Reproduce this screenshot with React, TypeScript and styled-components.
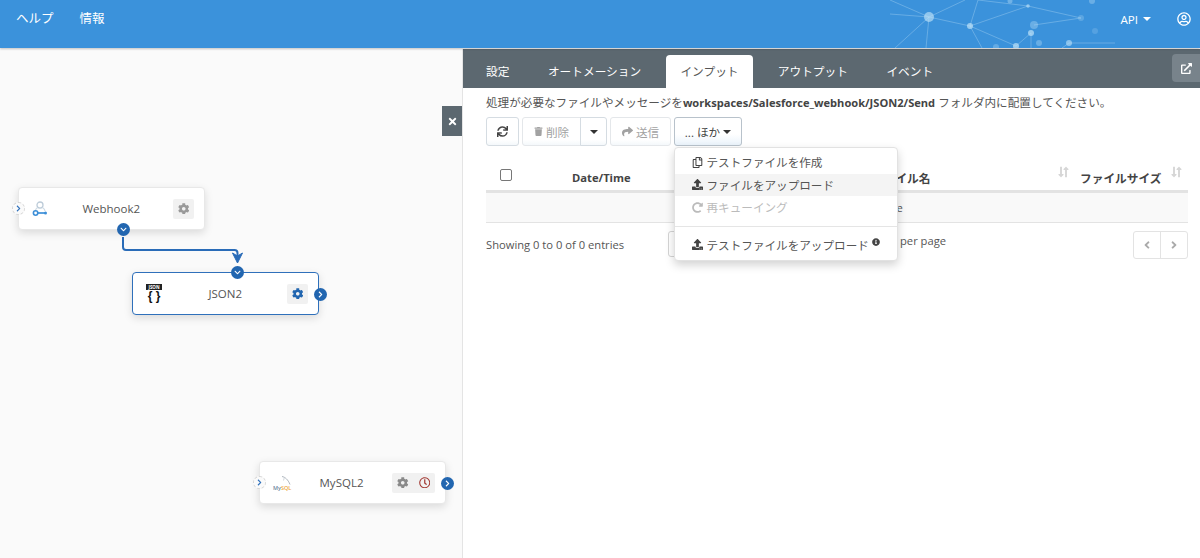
import styled, { createGlobalStyle } from "styled-components"
import {
  FaAngleLeft,
  FaAngleRight,
  FaChevronDown,
  FaChevronRight,
  FaCog,
  FaExternalLinkAlt,
  FaInfoCircle,
  FaLongArrowAltDown,
  FaLongArrowAltUp,
  FaRedoAlt,
  FaRegClock,
  FaRegCopy,
  FaRegUserCircle,
  FaShare,
  FaSync,
  FaTimes,
  FaTrash,
  FaUpload,
} from "react-icons/fa"

const GlobalStyle = createGlobalStyle`
  html, body {
    margin: 0;
    height: 100%;
    overflow: hidden;
  }
  body {
    font-family: "Open Sans", "Noto Sans CJK JP", sans-serif;
    font-size: 12px;
    color: #555;
    background: #fff;
  }
`

const Page = styled.div`
  width: 1200px;
  height: 558px;
  display: flex;
  flex-direction: column;
  overflow: hidden;
`

const Header = styled.header`
  position: relative;
  z-index: 2;
  height: 48px;
  flex: none;
  background: #3b92db;
  box-shadow: 0 1px 2px rgba(0, 0, 0, 0.25);
  display: flex;
  align-items: flex-start;
  color: #fff;
`

const NavLink = styled.a<{ $gap: number }>`
  margin-top: 9px;
  font-size: 12.5px;
  line-height: 20px;
  color: #fff;
  margin-left: ${(p) => p.$gap}px;
`

const HeaderRight = styled.div`
  margin-left: auto;
  margin-top: 9px;
  padding-right: 9px;
  display: flex;
  align-items: center;
  height: 20px;
  gap: 26px;
`

const ApiMenu = styled.span`
  display: flex;
  align-items: center;
  gap: 5px;
  font-size: 11.6px;
`

const Caret = styled.i<{ $dark?: boolean }>`
  display: inline-block;
  width: 0;
  height: 0;
  border-left: 4px solid transparent;
  border-right: 4px solid transparent;
  border-top: 4px solid ${(p) => (p.$dark ? "#333" : "#fff")};
`

const Network = styled.svg`
  position: absolute;
  left: 890px;
  top: 0;
`

const Body = styled.div`
  flex: 1;
  display: flex;
  min-height: 0;
  padding-top: 1px;
`

const Canvas = styled.section`
  position: relative;
  width: 462px;
  flex: none;
  background: #fafafa;
  border-right: 1px solid #e4e4e4;
`

const CloseTab = styled.button`
  position: absolute;
  right: 0;
  top: 57px;
  width: 20px;
  height: 30px;
  padding: 0;
  border: 0;
  background: #5c6870;
  color: #fff;
  font-size: 11px;
  display: flex;
  align-items: center;
  justify-content: center;
`

const Connector = styled.svg`
  position: absolute;
  left: 0;
  top: 0;
  pointer-events: none;
`

const Node = styled.div<{ $x: number; $y: number; $selected?: boolean }>`
  position: absolute;
  left: ${(p) => p.$x}px;
  top: ${(p) => p.$y}px;
  box-sizing: border-box;
  width: 187px;
  height: 43px;
  background: #fff;
  border-radius: 4px;
  border: 1px solid ${(p) => (p.$selected ? "#2f70bb" : "#e8e8e8")};
  box-shadow: 0 3px 8px rgba(0, 0, 0, 0.13);
  display: flex;
  align-items: center;
  padding: 0 10px 0 13px;
  color: #555;
`

const NodeIcon = styled.div`
  width: 16px;
  height: 24px;
  flex: none;
  display: flex;
  flex-direction: column;
  align-items: flex-start;
  justify-content: center;
`

const NodeName = styled.span`
  flex: 1;
  text-align: center;
  font-size: 11.5px;
  padding-left: 2px;
`

const NodeActions = styled.div`
  display: flex;
  align-items: center;
  height: 20px;
  flex: none;
  background: #f1f1f1;
  border-radius: 2px;
  padding: 0 5px;
  gap: 10px;
`

const ActionIcon = styled.span<{ $color: string }>`
  display: flex;
  color: ${(p) => p.$color};
  font-size: 11.5px;
`

const Port = styled.span<{ $side: "left" | "right" | "top" | "bottom"; $ghost?: boolean }>`
  position: absolute;
  width: 13px;
  height: 13px;
  border-radius: 50%;
  display: flex;
  align-items: center;
  justify-content: center;
  font-size: 7px;
  box-sizing: border-box;
  color: ${(p) => (p.$ghost ? "#2f70bb" : "#fff")};
  background: ${(p) => (p.$ghost ? "#fafafa" : "#2266b0")};
  border: ${(p) => (p.$ghost ? "1px dashed #d4d4d4" : "none")};
  ${(p) => p.$side === "left" && "left: -7px; top: 14px;"}
  ${(p) => p.$side === "right" && "right: -9px; top: 14.5px;"}
  ${(p) => p.$side === "top" && "left: 98px; top: -7px;"}
  ${(p) => p.$side === "bottom" && "left: 98px; bottom: -7px;"}
`

const JsonBadge = styled.span`
  width: 16px;
  background: #222;
  color: #fff;
  font-size: 4.5px;
  font-weight: 700;
  line-height: 6px;
  text-align: center;
`

const JsonBraces = styled.span`
  width: 16px;
  color: #111;
  font-family: "Liberation Sans", sans-serif;
  font-size: 12px;
  font-weight: 700;
  line-height: 13px;
  text-align: center;
  white-space: nowrap;
`

const MysqlLogo = styled.span`
  font-size: 5.5px;
  font-weight: 600;
  line-height: 6px;
  color: #6d86a0;
  white-space: nowrap;

  b {
    font-weight: 600;
    color: #eda53c;
  }
`

const Dolphin = styled.svg`
  margin: 2px 0 0 8px;
`

const Panel = styled.section`
  flex: 1;
  min-width: 0;
  display: flex;
  flex-direction: column;
`

const TabBar = styled.nav`
  position: relative;
  flex: none;
  height: 39px;
  box-sizing: border-box;
  background: #5c6870;
  display: flex;
  align-items: flex-end;
  padding-left: 9px;
`

const Tab = styled.span<{ $active?: boolean }>`
  height: 33px;
  line-height: 33px;
  padding: 0 ${(p) => (p.$active ? 14.75 : 14)}px;
  font-size: 11.7px;
  border-radius: 4px 4px 0 0;
  margin-right: 10.5px;
  color: ${(p) => (p.$active ? "#555" : "#fff")};
  background: ${(p) => (p.$active ? "#fff" : "transparent")};
`

const PopOut = styled.span`
  position: absolute;
  right: 0;
  top: 5px;
  width: 28px;
  height: 28px;
  background: #78838b;
  border-radius: 4px 0 0 4px;
  color: #fff;
  font-size: 11px;
  display: flex;
  align-items: center;
  justify-content: center;
`

const Content = styled.div`
  position: relative;
  flex: 1;
  padding: 6px 12px 0 23px;
`

const Notice = styled.p`
  margin: 0 0 6px;
  font-size: 11.6px;
  line-height: 17px;
  white-space: nowrap;

  b {
    font-size: 11.1px;
    color: #444;
  }
`

const Toolbar = styled.div`
  display: flex;
  gap: 3px;
  height: 29px;
`

const Group = styled.div`
  display: flex;
`

const Btn = styled.button<{ $w: number; $muted?: boolean; $open?: boolean; $joinL?: boolean; $joinR?: boolean }>`
  width: ${(p) => p.$w}px;
  height: 29px;
  box-sizing: border-box;
  padding: 0;
  font: inherit;
  font-size: 11.6px;
  display: flex;
  align-items: center;
  justify-content: center;
  gap: 3px;
  color: ${(p) => (p.$muted ? "#a2a2a2" : "#444")};
  background: ${(p) => (p.$open ? "linear-gradient(#fff 60%, #eaf3fb)" : "linear-gradient(#fff 80%, #f4f8fb)")};
  border: 1px solid ${(p) => (p.$open ? "#b8c2cb" : p.$muted ? "#e4e7ea" : "#d5dce2")};
  border-radius: ${(p) => (p.$joinL ? "0 3px 3px 0" : p.$joinR ? "3px 0 0 3px" : "3px")};
  ${(p) => p.$joinL && "margin-left: -1px; border-color: #d5dce2;"}
`

const Table = styled.table`
  width: 702px;
  margin-top: 13px;
  border-collapse: collapse;
  table-layout: fixed;
`

const Th = styled.th<{ $w: number; $pad?: number }>`
  position: relative;
  width: ${(p) => p.$w}px;
  height: 32px;
  box-sizing: border-box;
  padding: 6px 0 0 ${(p) => p.$pad || 0}px;
  text-align: left;
  font-size: 11.7px;
  font-weight: 700;
  color: #444;
  border-bottom: 3px solid #e3e3e3;
  white-space: nowrap;
`

const DateLabel = styled.span`
  font-size: 11.2px;
`

const SortIcon = styled.span`
  position: absolute;
  right: 3px;
  top: 7px;
  color: #d6d6d6;
  font-size: 12px;
  display: flex;

  svg + svg {
    margin-left: -7px;
  }
`

const CheckBox = styled.input`
  appearance: none;
  display: block;
  margin: -4px 0 0 14px;
  width: 12px;
  height: 12px;
  border: 1px solid #777;
  border-radius: 2px;
  background: #fff;
`

const EmptyCell = styled.td`
  height: 29px;
  padding: 0;
  text-align: center;
  font-size: 11.2px;
  background: #f9f9f9;
  border-bottom: 1px solid #e3e3e3;
`

const Footer = styled.div`
  display: flex;
  align-items: flex-start;
  margin-top: 8px;
  font-size: 11.2px;
`

const Showing = styled.span`
  margin-top: 6px;
  line-height: 16px;
  width: 182px;
`

const PageSize = styled.span`
  width: 50px;
  height: 26px;
  box-sizing: border-box;
  border: 1px solid #d5d5d5;
  border-radius: 3px;
`

const PerPage = styled.span`
  margin-left: 182px;
  margin-top: 2px;
  line-height: 16px;
`

const Pager = styled.div`
  margin-left: auto;
  display: flex;
  border: 1px solid #e3e3e3;
  border-radius: 3px;
`

const PagerBtn = styled.span<{ $first?: boolean }>`
  width: 26px;
  height: 26px;
  display: flex;
  align-items: center;
  justify-content: center;
  font-size: 12px;
  color: #aaa;
  ${(p) => p.$first && "border-right: 1px solid #e3e3e3;"}
`

const Menu = styled.ul`
  position: absolute;
  left: 211px;
  top: 59px;
  width: 224px;
  height: 114px;
  box-sizing: border-box;
  margin: 0;
  padding: 3px 0 0;
  list-style: none;
  background: #fff;
  border: 1px solid #e2e2e2;
  border-radius: 4px;
  box-shadow: 0 4px 10px rgba(0, 0, 0, 0.18);
`

const MenuItem = styled.li<{ $active?: boolean; $disabled?: boolean }>`
  height: 22.5px;
  display: flex;
  align-items: center;
  gap: 3.5px;
  padding-left: 17px;
  font-size: 11.6px;
  color: ${(p) => (p.$disabled ? "#bbb" : "#555")};
  background: ${(p) => (p.$active ? "#f4f4f4" : "transparent")};

  svg {
    font-size: 11px;
    color: ${(p) => (p.$disabled ? "#bbb" : "#444")};
  }
`

const Divider = styled.li`
  height: 1px;
  margin: 7px 0 7px;
  background: #e5e5e5;
`

const Info = styled.sup`
  display: flex;
  margin: -5px 0 0 0;
  color: #444;

  svg {
    font-size: 8px;
  }
`

const dots: [number, number, number, number][] = [
  [39, 17, 5, 0.55],
  [80, 26, 3, 0.6],
  [138, 6, 1.8, 0.55],
  [120, 1, 2.5, 0.3],
  [144, 25, 4, 0.25],
  [141, 33, 3, 0.6],
  [126, 46, 3, 0.6],
  [149, 43, 3, 0.25],
  [179, 43, 3, 0.5],
  [106, 47, 3, 0.2],
  [191, 18, 3, 0.15],
  [202, 1, 3, 0.25],
  [205, 31, 3, 0.1],
]

const lines: [number, number, number, number][] = [
  [39, 17, 80, 26],
  [39, 17, 75, 0],
  [39, 17, 36, 48],
  [39, 17, 0, 0],
  [39, 17, 5, 48],
  [39, 17, 0, 14],
  [80, 26, 88, 0],
  [80, 26, 138, 6],
  [80, 26, 126, 46],
  [80, 26, 92, 48],
  [88, 0, 138, 6],
  [144, 25, 191, 18],
  [138, 6, 191, 18],
  [141, 33, 126, 46],
  [141, 33, 141, 48],
  [179, 43, 172, 48],
  [179, 43, 225, 43],
]

function SortArrows() {
  return (
    <SortIcon>
      <FaLongArrowAltDown />
      <FaLongArrowAltUp />
    </SortIcon>
  )
}

function WebhookIcon() {
  return (
    <svg width="16" height="16" viewBox="0 0 16 16" fill="none">
      <circle cx="8" cy="4" r="3" stroke="#bccbd8" strokeWidth="1.3" />
      <path d="M5.5 6.5 C3.5 8 3 9.5 3 11 M10.5 6.5 C12.5 8 13 9.5 13 10" stroke="#cfdbe5" strokeWidth="1.2" />
      <circle cx="3.6" cy="12" r="2.2" stroke="#3d8fd8" strokeWidth="1.6" />
      <path d="M5.5 12 H14" stroke="#3d8fd8" strokeWidth="1.7" />
      <circle cx="13.5" cy="12" r="1.5" fill="#3d8fd8" />
    </svg>
  )
}

function DolphinMark() {
  return (
    <Dolphin width="10" height="9" viewBox="0 0 10 9" fill="none">
      <path d="M1 0.5 C4 1 7 3.5 9 8.5" stroke="#9aa5ae" strokeWidth="0.8" />
      <path d="M3.5 1 L2.5 4.5" stroke="#c5ccd2" strokeWidth="0.8" />
    </Dolphin>
  )
}

export default function App() {
  return (
    <Page>
      <GlobalStyle />
      <Header>
        <Network width="230" height="48" viewBox="0 0 230 48">
          {lines.map(([x1, y1, x2, y2], i) => (
            <line key={i} x1={x1} y1={y1} x2={x2} y2={y2} stroke="#a9d4f3" strokeOpacity="0.4" strokeWidth="1" />
          ))}
          {dots.map(([cx, cy, r, o], i) => (
            <circle key={i} cx={cx} cy={cy} r={r} fill="#bfe2f8" fillOpacity={o + 0.1} />
          ))}
        </Network>
        <NavLink $gap={16}>ヘルプ</NavLink>
        <NavLink $gap={26}>情報</NavLink>
        <HeaderRight>
          <ApiMenu>
            API <Caret />
          </ApiMenu>
          <FaRegUserCircle size={14} />
        </HeaderRight>
      </Header>
      <Body>
        <Canvas>
          <Connector width="461" height="509">
            <path
              d="M123 188 V198 Q123 201 126 201 H234.5 Q237.5 201 237.5 204 V210"
              fill="none"
              stroke="#2a6cb8"
              strokeWidth="2"
            />
            <path d="M232.5 204 L237.5 214 L242.5 204 L237.5 207 Z" fill="#2a6cb8" stroke="#2a6cb8" />
          </Connector>
          <Node $x={18} $y={138}>
            <Port $side="left" $ghost>
              <FaChevronRight />
            </Port>
            <NodeIcon>
              <WebhookIcon />
            </NodeIcon>
            <NodeName>Webhook2</NodeName>
            <NodeActions>
              <ActionIcon $color="#999">
                <FaCog />
              </ActionIcon>
            </NodeActions>
            <Port $side="bottom">
              <FaChevronDown />
            </Port>
          </Node>
          <Node $x={132} $y={223} $selected>
            <Port $side="top">
              <FaChevronDown />
            </Port>
            <NodeIcon>
              <JsonBadge>JSON</JsonBadge>
              <JsonBraces>{"{ }"}</JsonBraces>
            </NodeIcon>
            <NodeName>JSON2</NodeName>
            <NodeActions>
              <ActionIcon $color="#2266b0">
                <FaCog />
              </ActionIcon>
            </NodeActions>
            <Port $side="right">
              <FaChevronRight />
            </Port>
          </Node>
          <Node $x={259} $y={412}>
            <Port $side="left" $ghost>
              <FaChevronRight />
            </Port>
            <NodeIcon>
              <DolphinMark />
              <MysqlLogo>
                My<b>SQL</b>
              </MysqlLogo>
            </NodeIcon>
            <NodeName>MySQL2</NodeName>
            <NodeActions>
              <ActionIcon $color="#8a8a8a">
                <FaCog />
              </ActionIcon>
              <ActionIcon $color="#a33b35">
                <FaRegClock />
              </ActionIcon>
            </NodeActions>
            <Port $side="right">
              <FaChevronRight />
            </Port>
          </Node>
          <CloseTab>
            <FaTimes />
          </CloseTab>
        </Canvas>
        <Panel>
          <TabBar>
            <Tab>設定</Tab>
            <Tab>オートメーション</Tab>
            <Tab $active>インプット</Tab>
            <Tab>アウトプット</Tab>
            <Tab>イベント</Tab>
            <PopOut>
              <FaExternalLinkAlt />
            </PopOut>
          </TabBar>
          <Content>
            <Notice>
              処理が必要なファイルやメッセージを<b>workspaces/Salesforce_webhook/JSON2/Send</b> フォルダ内に配置してください。
            </Notice>
            <Toolbar>
              <Btn $w={33}>
                <FaSync size={11} />
              </Btn>
              <Group>
                <Btn $w={59} $muted $joinR>
                  <FaTrash size={9} />
                  削除
                </Btn>
                <Btn $w={27} $joinL>
                  <Caret $dark />
                </Btn>
              </Group>
              <Btn $w={61} $muted>
                <FaShare size={11} />
                送信
              </Btn>
              <Btn $w={68} $open>
                ... ほか <Caret $dark />
              </Btn>
            </Toolbar>
            <Table>
              <thead>
                <tr>
                  <Th $w={86}>
                    <CheckBox type="checkbox" />
                  </Th>
                  <Th $w={104}>
                    <DateLabel>Date/Time</DateLabel>
                  </Th>
                  <Th $w={399} $pad={196}>
                    ファイル名
                    <SortArrows />
                  </Th>
                  <Th $w={113} $pad={5}>
                    ファイルサイズ
                    <SortArrows />
                  </Th>
                </tr>
              </thead>
              <tbody>
                <tr>
                  <EmptyCell colSpan={4}>No data available in table</EmptyCell>
                </tr>
              </tbody>
            </Table>
            <Footer>
              <Showing>Showing 0 to 0 of 0 entries</Showing>
              <PageSize />
              <PerPage>per page</PerPage>
              <Pager>
                <PagerBtn $first>
                  <FaAngleLeft />
                </PagerBtn>
                <PagerBtn>
                  <FaAngleRight />
                </PagerBtn>
              </Pager>
            </Footer>
            <Menu>
              <MenuItem>
                <FaRegCopy />
                テストファイルを作成
              </MenuItem>
              <MenuItem $active>
                <FaUpload />
                ファイルをアップロード
              </MenuItem>
              <MenuItem $disabled>
                <FaRedoAlt />
                再キューイング
              </MenuItem>
              <Divider />
              <MenuItem>
                <FaUpload />
                テストファイルをアップロード
                <Info>
                  <FaInfoCircle />
                </Info>
              </MenuItem>
            </Menu>
          </Content>
        </Panel>
      </Body>
    </Page>
  )
}
